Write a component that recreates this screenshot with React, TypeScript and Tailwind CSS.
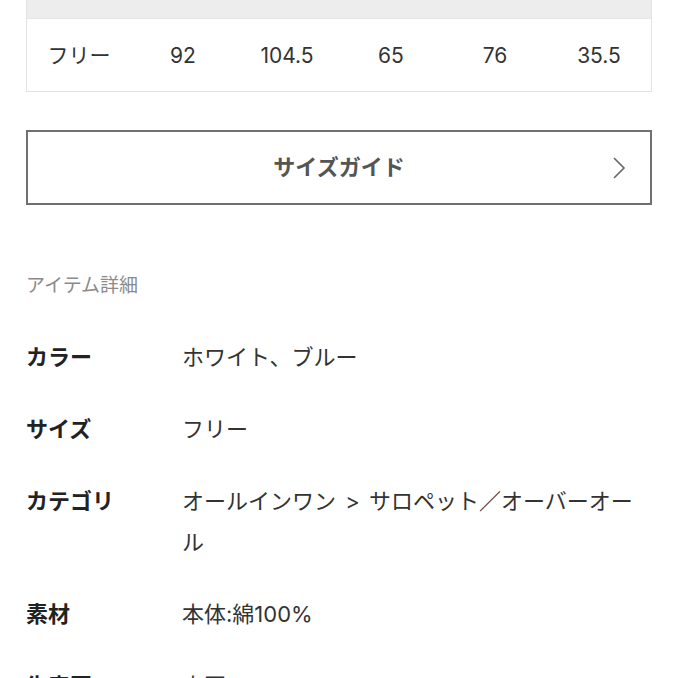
const sizes = ["フリー", "92", "104.5", "65", "76", "35.5"];

const details: { label: string; value: string }[] = [
  { label: "カラー", value: "ホワイト、ブルー" },
  { label: "サイズ", value: "フリー" },
  { label: "カテゴリ", value: "オールインワン > サロペット／オーバーオール" },
  { label: "素材", value: "本体:綿100%" },
  { label: "生産国", value: "中国" },
];

const App = () => {
  return (
    <div className="w-[678px] h-[678px] overflow-hidden bg-white px-[26px] font-['Inter','Noto_Sans_CJK_JP',sans-serif]">
      {/* Size table */}
      <div className="border-x border-b border-[#e3e3e3]">
        <div className="h-[19px] bg-[#ededed] border-b border-[#e6e6e6]"></div>
        <div className="grid grid-cols-6 h-[72px] items-center text-center text-[21px] text-[#333] pt-[1px]">
          {sizes.map((s, i) => (
            <span key={i}>{s}</span>
          ))}
        </div>
      </div>

      {/* Size guide button */}
      <button className="relative mt-[38px] w-full h-[75px] border-2 border-[#707070] flex items-center justify-center">
        <span className="text-[22px] font-bold text-[#555]">サイズガイド</span>
        <svg className="absolute right-[24px] top-1/2 -translate-y-1/2" width="14" height="24" viewBox="0 0 14 24" fill="none">
          <polyline points="2,2 12,12 2,22" stroke="#666" strokeWidth="1.6" />
        </svg>
      </button>

      {/* Item details */}
      <h2 className="mt-[67px] text-[19px] leading-[28px] text-[#8a8a8a]">アイテム詳細</h2>
      <dl className="mt-[37px] flex flex-col gap-[31px]">
        {details.map((d) => (
          <div key={d.label} className="grid grid-cols-[156px_1fr] text-[22px] leading-[41px]">
            <dt className="font-bold text-[#222]">{d.label}</dt>
            <dd className="text-[#333] [word-spacing:3px]">{d.value}</dd>
          </div>
        ))}
      </dl>
    </div>
  );
};

export default App;
